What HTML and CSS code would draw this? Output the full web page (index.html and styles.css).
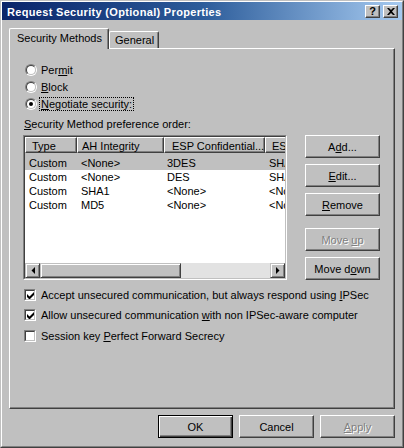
FILE: index.html
```html
<!DOCTYPE html>
<html>
<head>
<meta charset="utf-8">
<title>Request Security (Optional) Properties</title>
<link rel="stylesheet" href="styles.css">
</head>
<body>
<div class="window">
  <div class="window-inner">
    <div class="titlebar">
      <span class="title">Request Security (Optional) Properties</span>
      <div class="caption-btns">
        <span class="cbtn help">?</span>
        <span class="cbtn close"><svg width="8" height="7" viewBox="0 0 8 7"><path d="M0 0h2l2 2 2-2h2L5 3.5 8 7H6L4 5 2 7H0l3-3.5z" fill="#000"/></svg></span>
      </div>
    </div>
    <div class="tabs">
      <div class="tab active">Security Methods</div>
      <div class="tab">General</div>
    </div>
    <div class="panel">
      <div class="radios">
        <div class="radio"><span class="rb"><span class="rb-in"></span></span><span class="rlabel">Per<u>m</u>it</span></div>
        <div class="radio"><span class="rb"><span class="rb-in"></span></span><span class="rlabel"><u>B</u>lock</span></div>
        <div class="radio"><span class="rb"><span class="rb-in"><span class="dot"></span></span></span><span class="rlabel focus"><u>N</u>egotiate security:</span></div>
      </div>
      <div class="list-label"><u>S</u>ecurity Method preference order:</div>
      <div class="list-area">
        <div class="lv">
          <div class="lv-in">
            <div class="lv-header">
              <div class="hcell w1">Type</div>
              <div class="hcell w2">AH Integrity</div>
              <div class="hcell w3">ESP Confidential...</div>
              <div class="hcell w4">ESP Integrity</div>
            </div>
            <div class="lv-body">
              <div class="lv-row sel"><span class="w1">Custom</span><span class="w2">&lt;None&gt;</span><span class="w3">3DES</span><span class="w4">SHA1</span></div>
              <div class="lv-row"><span class="w1">Custom</span><span class="w2">&lt;None&gt;</span><span class="w3">DES</span><span class="w4">SHA1</span></div>
              <div class="lv-row"><span class="w1">Custom</span><span class="w2">SHA1</span><span class="w3">&lt;None&gt;</span><span class="w4">&lt;None&gt;</span></div>
              <div class="lv-row"><span class="w1">Custom</span><span class="w2">MD5</span><span class="w3">&lt;None&gt;</span><span class="w4">&lt;None&gt;</span></div>
            </div>
            <div class="hscroll">
              <span class="sbtn"><svg width="4" height="7" viewBox="0 0 4 7"><path d="M4 0v7L0.5 3.5z" fill="#000"/></svg></span>
              <span class="thumb"></span>
              <span class="track"></span>
              <span class="sbtn"><svg width="4" height="7" viewBox="0 0 4 7"><path d="M0 0v7l3.5-3.5z" fill="#000"/></svg></span>
            </div>
          </div>
        </div>
        <div class="side-buttons">
          <div class="btn b-add"><span>A<u>d</u>d...</span></div>
          <div class="btn b-edit"><span><u>E</u>dit...</span></div>
          <div class="btn b-remove"><span><u>R</u>emove</span></div>
          <div class="btn b-up disabled"><span>Move <u>u</u>p</span></div>
          <div class="btn b-down"><span>Move d<u>o</u>wn</span></div>
        </div>
      </div>
      <div class="checks">
        <div class="check"><span class="cb"><span class="cb-in"><svg width="7" height="7" viewBox="0 0 7 7"><path d="M0 2v3l2 2h1l4-4V0L2.5 4.5z" fill="#000"/></svg></span></span><span>Accept unsecured communication, but always respond using <u>I</u>PSec</span></div>
        <div class="check"><span class="cb"><span class="cb-in"><svg width="7" height="7" viewBox="0 0 7 7"><path d="M0 2v3l2 2h1l4-4V0L2.5 4.5z" fill="#000"/></svg></span></span><span>Allow unsecured communication <u>w</u>ith non IPSec-aware computer</span></div>
        <div class="check"><span class="cb"><span class="cb-in"></span></span><span>Session key <u>P</u>erfect Forward Secrecy</span></div>
      </div>
    </div>
    <div class="footer">
      <div class="btn default"><span>OK</span></div>
      <div class="btn"><span>Cancel</span></div>
      <div class="btn disabled"><span><u>A</u>pply</span></div>
    </div>
  </div>
</div>
</body>
</html>
```

FILE: styles.css
```css
* { box-sizing: border-box; }
html, body { margin: 0; padding: 0; }
body {
  background: #c0c0c0;
  font-family: "Liberation Sans", Arial, sans-serif;
  font-size: 11px;
  color: #000;
}
u { text-decoration: underline; text-underline-offset: 1px; }

.window {
  width: 404px;
  height: 448px;
  border: 1px solid;
  border-color: #c0c0c0 #404040 #404040 #c0c0c0;
  background: #c0c0c0;
}
.window-inner {
  height: 100%;
  border: 1px solid;
  border-color: #fff #808080 #808080 #fff;
  display: flex;
  flex-direction: column;
}

.titlebar {
  height: 18px;
  flex: none;
  display: flex;
  align-items: center;
  padding-left: 5px;
  padding-right: 4px;
  padding-top: 1px;
  background: linear-gradient(90deg, #0a246a 0%, #2c5c9a 50%, #a6caf0 100%);
  color: #fff;
  font-weight: bold;
  font-size: 11px;
}
.title { white-space: nowrap; letter-spacing: 0.32px; }
.caption-btns {
  margin-left: auto;
  display: flex;
  gap: 3px;
}
.cbtn {
  width: 15px;
  height: 13px;
  background: #c0c0c0;
  border: 1px solid;
  border-color: #fff #404040 #404040 #fff;
  box-shadow: inset -1px -1px #808080;
  display: flex;
  align-items: center;
  justify-content: center;
  color: #000;
  font-weight: bold;
  font-size: 11px;
  line-height: 1;
  letter-spacing: 0;
}
.help { padding-bottom: 1px; }

.tabs {
  height: 28px;
  flex: none;
  display: flex;
  align-items: flex-end;
  padding-left: 7px;
}
.tab {
  height: 17px;
  padding: 0 4px 0 5px;
  border-top: 1px solid #fff;
  border-left: 1px solid #fff;
  border-right: 1px solid #404040;
  box-shadow: inset -1px 0 #808080;
  border-radius: 2px 2px 0 0;
  display: flex;
  align-items: center;
  white-space: nowrap;
  background: #c0c0c0;
}
.tab.active {
  height: 21px;
  margin-bottom: -1px;
  padding: 0 6px 2px 7px;
  position: relative;
  z-index: 1;
}

.panel {
  margin-left: 7px;
  width: 386px;
  height: 361px;
  flex: none;
  border: 1px solid;
  border-color: #fff #404040 #404040 #fff;
  box-shadow: inset -1px -1px #808080;
  padding: 12px 0 0 13px;
}

.radios { margin-left: 2px; }
.radio {
  height: 17px;
  display: flex;
  align-items: center;
}
.rb {
  width: 12px;
  height: 12px;
  border-radius: 50%;
  border: 1px solid;
  border-color: #808080 #fff #fff #808080;
  margin-right: 4px;
  flex: none;
}
.rb-in {
  display: flex;
  align-items: center;
  justify-content: center;
  width: 100%;
  height: 100%;
  border-radius: 50%;
  border: 1px solid;
  border-color: #404040 #c0c0c0 #c0c0c0 #404040;
  background: #fff;
}
.dot {
  width: 4px;
  height: 4px;
  border-radius: 50%;
  background: #000;
}
.rlabel { padding: 0 1px; border: 1px solid transparent; margin-left: -2px; }
.rlabel.focus { border: 1px dotted #000; }

.list-label {
  margin-top: 6px;
  height: 13px;
  line-height: 13px;
  margin-left: 1px;
}

.list-area {
  margin-top: 4px;
  display: flex;
}
.lv {
  width: 264px;
  height: 145px;
  border: 1px solid;
  border-color: #808080 #fff #fff #808080;
  flex: none;
}
.lv-in {
  height: 100%;
  border: 1px solid;
  border-color: #404040 #c0c0c0 #c0c0c0 #404040;
  background: #fff;
  display: flex;
  flex-direction: column;
  overflow: hidden;
}
.lv-header {
  height: 16px;
  flex: none;
  display: flex;
  white-space: nowrap;
}
.hcell {
  flex: none;
  height: 16px;
  background: #c0c0c0;
  border: 1px solid;
  border-color: #fff #404040 #404040 #fff;
  box-shadow: inset -1px -1px #808080;
  padding: 1px 0 0 6px;
  line-height: 14px;
  overflow: hidden;
}
.hcell.w2 { padding-left: 4px; }
.hcell.w3 { padding-left: 7px; }
.w1 { width: 52px; }
.w2 { width: 87px; }
.w3 { width: 101px; }
.w4 { width: 40px; }
.lv-body {
  flex: 1;
  overflow: hidden;
}
.lv-row {
  height: 14px;
  line-height: 14px;
  display: flex;
  white-space: nowrap;
}
.lv-row span { flex: none; padding-left: 4px; overflow: hidden; }
.lv-row .w2 { padding-left: 4px; }
.lv-row .w3 { padding-left: 3px; }
.lv-row.sel { background: #c0c0c0; height: 17px; padding-top: 3px; }

.hscroll {
  height: 15px;
  flex: none;
  display: flex;
}
.sbtn {
  width: 15px;
  height: 15px;
  flex: none;
  background: #c0c0c0;
  border: 1px solid;
  border-color: #c0c0c0 #404040 #404040 #c0c0c0;
  box-shadow: inset 1px 1px #fff, inset -1px -1px #808080;
  display: flex;
  align-items: center;
  justify-content: center;
}
.thumb {
  width: 141px;
  flex: none;
  background: #c0c0c0;
  border: 1px solid;
  border-color: #c0c0c0 #404040 #404040 #c0c0c0;
  box-shadow: inset 1px 1px #fff, inset -1px -1px #808080;
}
.track {
  flex: 1;
  background: #e2e2e2;
}

.side-buttons {
  margin-left: 18px;
  display: flex;
  flex-direction: column;
}
.btn {
  width: 75px;
  height: 23px;
  background: #c0c0c0;
  border: 1px solid;
  border-color: #fff #404040 #404040 #fff;
  box-shadow: inset -1px -1px #808080;
  display: flex;
  align-items: center;
  justify-content: center;
  white-space: nowrap;
}
.b-edit, .b-remove { margin-top: 6px; }
.b-up { margin-top: 12px; }
.b-down { margin-top: 6px; }
.btn.disabled {
  color: #808080;
  text-shadow: 1px 1px 0 #fff;
}
.btn.default {
  border: 1px solid #000;
  box-shadow: inset 1px 1px #fff, inset -1px -1px #404040, inset -2px -2px #808080;
}

.checks { margin-top: 5px; margin-left: 1px; }
.check {
  height: 20px;
  display: flex;
  align-items: center;
  white-space: nowrap;
}
.check:last-child { margin-top: 1px; }
.cb {
  width: 12px;
  height: 12px;
  flex: none;
  border: 1px solid;
  border-color: #808080 #fff #fff #808080;
  margin-right: 5px;
}
.cb-in {
  width: 100%;
  height: 100%;
  border: 1px solid;
  border-color: #404040 #c0c0c0 #c0c0c0 #404040;
  background: #fff;
  display: flex;
  align-items: center;
  justify-content: center;
}

.footer {
  margin-top: 6px;
  display: flex;
  justify-content: flex-end;
  gap: 6px;
  padding-right: 7px;
}
```
